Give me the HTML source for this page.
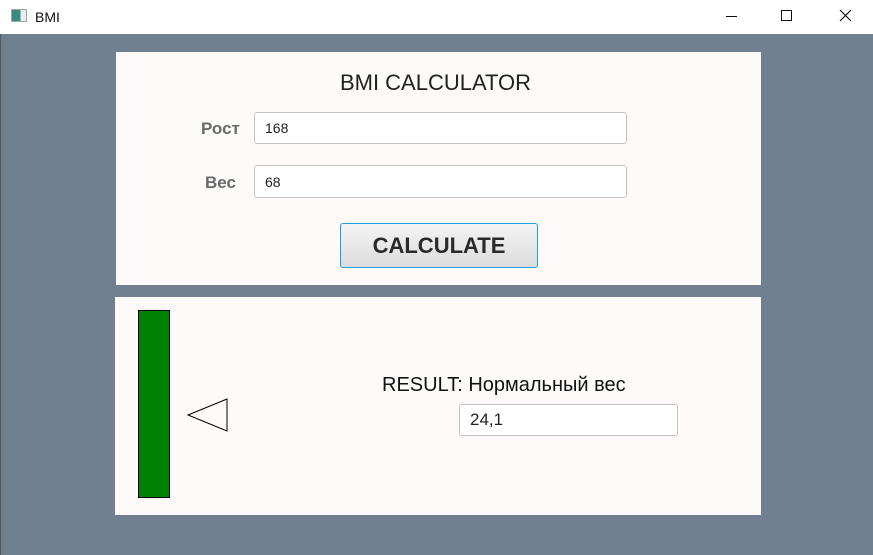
<!DOCTYPE html>
<html><head><meta charset="utf-8"><style>
*{margin:0;padding:0;box-sizing:border-box}
body{width:873px;height:555px;background:#708090;position:relative;overflow:hidden;font-family:"Liberation Sans",sans-serif}
.title{position:absolute;left:0;top:0;width:873px;height:34px;background:#fff}
.bl{position:absolute;left:0;top:34px;width:1px;height:521px;background:#555}
.p{position:absolute;background:#fffafa}
.inp{position:absolute;background:#fff;border:1px solid #c4c4c4;border-radius:3px;font-size:14px;padding-left:10px;color:#222;display:flex;align-items:center;font-family:"Liberation Sans",sans-serif}
.lbl{position:absolute;font-weight:bold;font-size:17px;color:#6a6a6a}
</style></head><body>
<div class="title">
 <div style="position:absolute;left:11px;top:9px;width:16px;height:13px;border:1px solid #9aa;background:linear-gradient(90deg,#3a8a80 0 60%,#e8eeee 60%)"></div>
 <div style="position:absolute;left:35px;top:9px;font-size:14px;color:#111">BMI</div>
 <div style="position:absolute;left:726px;top:16px;width:11px;height:1px;background:#111"></div>
 <div style="position:absolute;left:781px;top:10px;width:11px;height:11px;border:1px solid #111"></div>
 <svg style="position:absolute;left:839px;top:9px" width="13" height="13"><path d="M1 1L12 12M12 1L1 12" stroke="#111" stroke-width="1.2"/></svg>
</div>
<div class="bl"></div>
<div class="p" style="left:116px;top:52px;width:645px;height:233px">
 <div style="position:absolute;left:-3px;width:645px;top:18px;text-align:center;font-size:22px;color:#222">BMI CALCULATOR</div>
 <div class="lbl" style="left:85px;top:67px">Рост</div>
 <div class="inp" style="left:138px;top:60px;width:373px;height:32px">168</div>
 <div class="lbl" style="left:89px;top:121px">Вес</div>
 <div class="inp" style="left:138px;top:113px;width:373px;height:33px">68</div>
 <div style="position:absolute;left:224px;top:171px;width:198px;height:45px;border:1px solid #1ea0e0;border-radius:3px;background:linear-gradient(#f4f4f4,#dcdcdc);font-weight:bold;font-size:22px;color:#2a2a2a;display:flex;align-items:center;justify-content:center">CALCULATE</div>
</div>
<div class="p" style="left:115px;top:297px;width:646px;height:218px">
 <div style="position:absolute;left:23px;top:13px;width:32px;height:188px;background:#008000;border:1px solid #000"></div>
 <svg style="position:absolute;left:71px;top:100px" width="42" height="36"><path d="M2 18L41 2L41 34Z" fill="none" stroke="#000" stroke-width="1"/></svg>
 <div style="position:absolute;left:267px;top:77px;font-size:20px;color:#111">RESULT: Нормальный вес</div>
 <div class="inp" style="left:344px;top:107px;width:219px;height:32px;font-size:17px">24,1</div>
</div>
</body></html>
